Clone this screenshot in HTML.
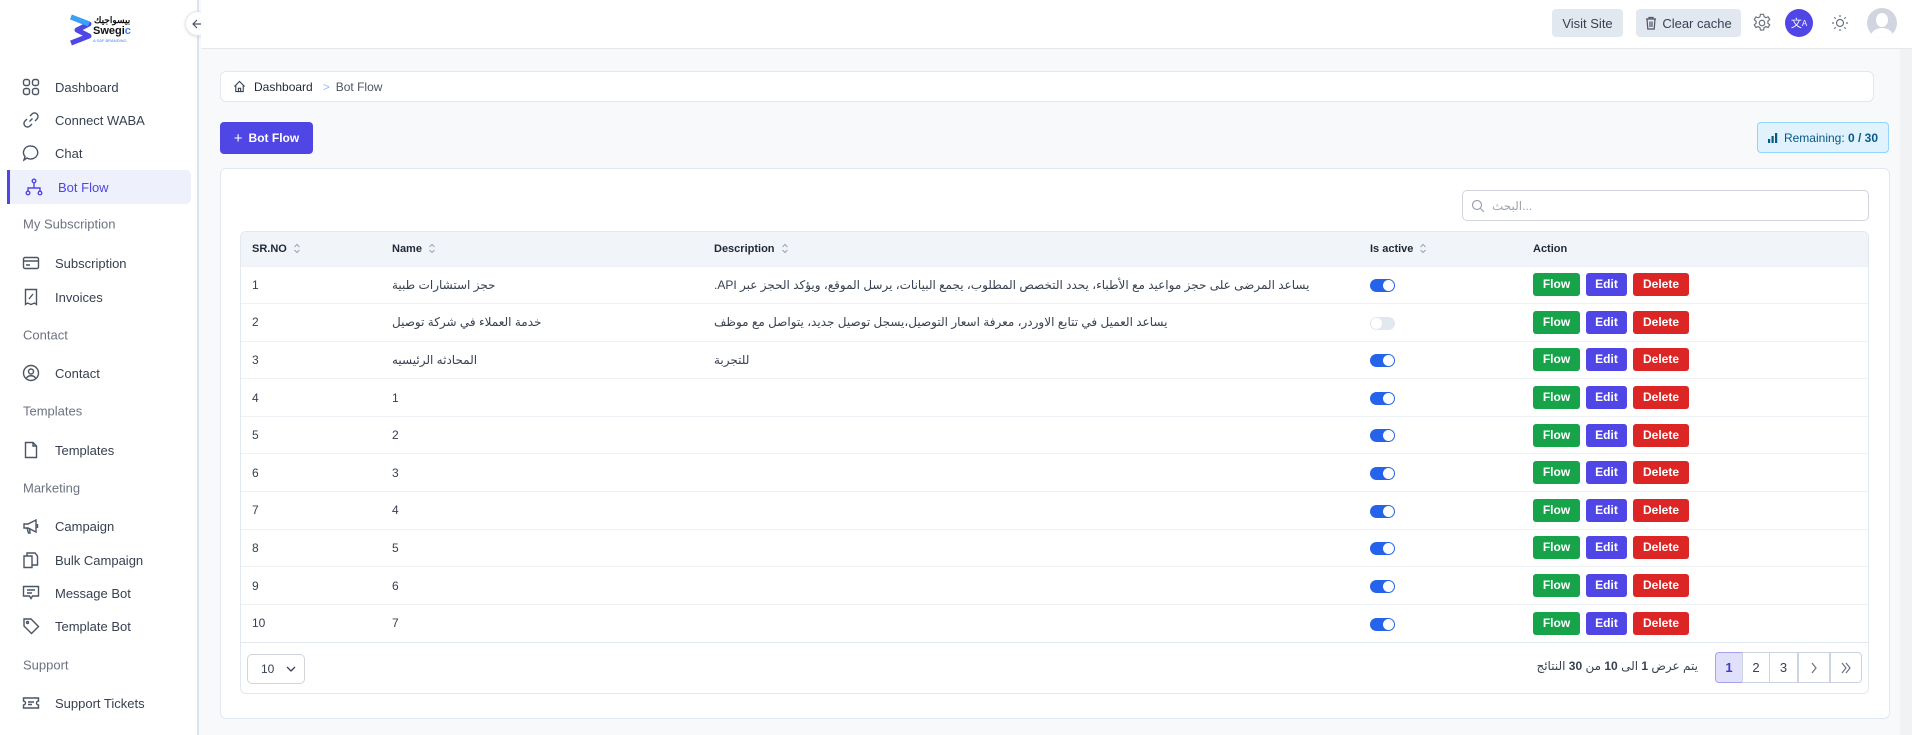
<!DOCTYPE html>
<html><head><meta charset="utf-8"><style>
*{box-sizing:border-box;margin:0;padding:0}
body{width:1912px;height:735px;overflow:hidden;background:#f8f9fb;font-family:"Liberation Sans","Noto Sans CJK SC",sans-serif;color:#374151;position:relative}
.abs{position:absolute}
#side{left:0;top:0;width:199px;height:735px;background:#fff;border-right:2px solid #dde3ec}
.mi{position:absolute;left:22px;font-size:13px;color:#374151;display:flex;align-items:center;height:20px;transform:translateY(-50%)}
.mi svg{width:18px;height:18px;margin-right:15px;stroke:#4b5563;fill:none;stroke-width:1.4}
.sh{position:absolute;left:23px;font-size:13px;color:#6b7280;transform:translateY(-50%)}
#hdr{left:201px;top:0;right:0;height:49px;background:#fff;border-bottom:1px solid #e5e7eb}
.btn{position:absolute;background:#e2e8f0;border-radius:4px;font-size:13px;color:#374151;display:flex;align-items:center;justify-content:center}
.card{position:absolute;background:#fff;border:1px solid #e2e8f0;border-radius:6px}
table{border-collapse:collapse;width:100%}
th{height:34px;background:#f1f4f8;font-size:11px;font-weight:bold;color:#1f2937;text-align:left;padding:0}
td{height:37.6px;font-size:12px;color:#374151;border-top:1px solid #eef1f5;padding:0}
.sort{display:inline-block;width:8px;height:11px;margin-left:6px;vertical-align:middle}
.tg{display:inline-block;width:25px;height:13px;border-radius:7px;background:#2563eb;position:relative;vertical-align:middle}
.tg:after{content:"";position:absolute;right:1px;top:1px;width:11px;height:11px;border-radius:50%;background:#fff}
.tg.off{background:#e2e8f0}.tg.off:after{left:1px;right:auto}
.b{display:inline-block;height:23px;line-height:23px;color:#fff;font-size:12px;font-weight:bold;border-radius:3px;text-align:center;margin-right:6px;vertical-align:middle}
.f{background:#16a34a;width:47px}.e{background:#4f46e5;width:41px}.d{background:#dc2626;width:56px}
.ar{font-family:"Liberation Sans","Noto Sans CJK SC","DejaVu Sans",sans-serif}
.pg{position:absolute;top:652px;height:31px;border:1px solid #cbd5e1;font-size:13px;display:flex;align-items:center;justify-content:center;color:#374151;background:#fff}
</style></head><body>
<svg width="0" height="0" style="position:absolute"><defs><symbol id="s" viewBox="0 0 8 11"><path d="M1.5 4 L4 1.5 L6.5 4 M1.5 7 L4 9.5 L6.5 7" fill="none" stroke="#9ca3af" stroke-width="1"/></symbol></defs></svg>
<div id="side" class="abs">
 <svg class="abs" style="left:67px;top:14px" width="28" height="32" viewBox="0 0 28 32"><path d="M4 3 L22 10 L10 16 L22 22 L4 29" stroke="#4f46e5" stroke-width="5" fill="none" stroke-linejoin="round"/><path d="M4 3 L22 10" stroke="#38a3f5" stroke-width="5"/></svg>
 <div class="abs" style="left:94px;top:15px;font-size:9px;font-weight:bold;color:#111">بيسواجيك</div>
 <div class="abs" style="left:93px;top:25px;font-size:11px;font-weight:bold;color:#111">Swegi<span style="color:#3b82f6">c</span></div>
 <div class="abs" style="left:93px;top:38px;font-size:4px;color:#3b82f6">A SAF BRANDING</div>
 <div class="mi" style="top:87px"><svg viewBox="0 0 18 18"><rect x="1.5" y="1.5" width="6" height="6" rx="2"/><rect x="10.5" y="1.5" width="6" height="6" rx="2"/><rect x="1.5" y="10.5" width="6" height="6" rx="2"/><rect x="10.5" y="10.5" width="6" height="6" rx="2"/></svg>Dashboard</div>
 <div class="mi" style="top:120px"><svg viewBox="0 0 18 18"><path d="M7.5 10.5 L10.5 7.5 M8 5 L10 3 a3 3 0 0 1 5 5 L13 10 M10 13 L8 15 a3 3 0 0 1 -5 -5 L5 8"/></svg>Connect WABA</div>
 <div class="mi" style="top:153px"><svg viewBox="0 0 18 18"><path d="M9 2 a7 6.5 0 1 1 -4 12 L2 16 L3 12.5 A7 6.5 0 0 1 9 2z"/></svg>Chat</div>
 <div class="abs" style="left:7px;top:170px;width:184px;height:34px;background:#eef0fb;border-left:3px solid #4f46e5;border-radius:0 5px 5px 0"></div>
 <div class="mi" style="top:187px;color:#4f46e5;left:25px"><svg viewBox="0 0 18 18" style="stroke:#4f46e5"><circle cx="9" cy="3" r="1.8"/><circle cx="3" cy="15" r="1.8"/><circle cx="15" cy="15" r="1.8"/><path d="M9 5 V10 M3 13 V10 H15 V13"/></svg>Bot Flow</div>
 <div class="sh" style="top:224px">My Subscription</div>
 <div class="mi" style="top:263px"><svg viewBox="0 0 18 18"><rect x="1.5" y="3.5" width="15" height="11" rx="1.5"/><path d="M1.5 7 H16.5 M4 11 H8"/></svg>Subscription</div>
 <div class="mi" style="top:297px"><svg viewBox="0 0 18 18"><path d="M3.5 1.5 H14.5 V16.5 L12.5 15 L9 16.5 L5.5 15 L3.5 16.5Z M7 11 L11 6"/></svg>Invoices</div>
 <div class="sh" style="top:335px">Contact</div>
 <div class="mi" style="top:373px"><svg viewBox="0 0 18 18"><circle cx="9" cy="9" r="7.5"/><circle cx="9" cy="7.5" r="2.5"/><path d="M4.5 14 a5 4 0 0 1 9 0"/></svg>Contact</div>
 <div class="sh" style="top:411px">Templates</div>
 <div class="mi" style="top:450px"><svg viewBox="0 0 18 18"><path d="M3.5 1.5 H11 L14.5 5 V16.5 H3.5Z M11 1.5 V5 H14.5"/></svg>Templates</div>
 <div class="sh" style="top:488px">Marketing</div>
 <div class="mi" style="top:526px"><svg viewBox="0 0 18 18"><path d="M2 7 H6 L14 3 V15 L6 11 H2Z M5 11 L6.5 16 H8 L7.5 11 M15.5 7 V11"/></svg>Campaign</div>
 <div class="mi" style="top:560px"><svg viewBox="0 0 18 18"><path d="M2 5 H10 V16.5 H2Z M5 5 V2 H13 L15.5 5 V14 H10"/></svg>Bulk Campaign</div>
 <div class="mi" style="top:593px"><svg viewBox="0 0 18 18"><path d="M1.5 2.5 H16.5 V12 H10.5 L9 14.5 L7.5 12 H1.5Z M5 6 H13 M5 9 H10"/></svg>Message Bot</div>
 <div class="mi" style="top:626px"><svg viewBox="0 0 18 18"><path d="M2 2 H9 L16.5 9.5 L9.5 16.5 L2 9Z"/><circle cx="5.5" cy="5.5" r="1"/></svg>Template Bot</div>
 <div class="sh" style="top:665px">Support</div>
 <div class="mi" style="top:703px"><svg viewBox="0 0 18 18"><path d="M1.5 4 H16.5 V7 a2 2 0 0 0 0 4 V14 H1.5 V11 a2 2 0 0 0 0 -4Z M6 8 H12 M6 10.5 H10"/></svg>Support Tickets</div>
</div>
<div class="abs" style="left:185px;top:11px;width:25px;height:25px;border-radius:50%;background:#fff;border:1px solid #e5e7eb;box-shadow:0 1px 3px rgba(0,0,0,.12);display:flex;align-items:center;justify-content:center"><svg width="12" height="12" viewBox="0 0 12 12" fill="none" stroke="#4b5563" stroke-width="1.2"><path d="M11 6 H1 M5 2 L1 6 L5 10"/></svg></div>
<div id="hdr" class="abs"></div>
<div class="btn" style="left:1552px;top:9px;width:71px;height:28px">Visit Site</div>
<div class="btn" style="left:1636px;top:9px;width:105px;height:28px"><svg width="12" height="14" viewBox="0 0 12 14" fill="none" stroke="#4b5563" stroke-width="1.2" style="margin-right:5px"><path d="M1 3 H11 M4 3 V1.5 H8 V3 M2 3 L2.8 13 H9.2 L10 3 M5 5.5 V11 M7 5.5 V11"/></svg>Clear cache</div>
<svg class="abs" style="left:1751px;top:12px" width="22" height="22" viewBox="0 0 24 24" fill="none" stroke="#6b7280" stroke-width="1.3"><circle cx="12" cy="12" r="3"/><path d="M10.3 2.5h3.4l.5 2.6 2 1.1 2.5-.9 1.7 2.9-2 1.8v2.2l2 1.8-1.7 2.9-2.5-.9-2 1.1-.5 2.6h-3.4l-.5-2.6-2-1.1-2.5.9-1.7-2.9 2-1.8V10.1l-2-1.8 1.7-2.9 2.5.9 2-1.1z"/></svg>
<div class="abs" style="left:1785px;top:9px;width:28px;height:28px;border-radius:50%;background:#4f46e5;color:#fff;font-size:11px;display:flex;align-items:center;justify-content:center">文<span style="font-size:8px">A</span></div>
<svg class="abs" style="left:1831px;top:14px" width="18" height="18" viewBox="0 0 18 18" fill="none" stroke="#6b7280" stroke-width="1.2"><circle cx="9" cy="9" r="3.5"/><path d="M9 1v2M9 15v2M1 9h2M15 9h2M3.3 3.3l1.4 1.4M13.3 13.3l1.4 1.4M3.3 14.7l1.4-1.4M13.3 4.7l1.4-1.4"/></svg>
<div class="abs" style="left:1867px;top:8px;width:30px;height:30px;border-radius:50%;background:#d1d5e0;overflow:hidden"><div class="abs" style="left:9px;top:5px;width:12px;height:14px;border-radius:50%;background:#fff"></div><div class="abs" style="left:4px;top:20px;width:22px;height:16px;border-radius:50%;background:#fff"></div></div>
<div class="abs" style="left:1900px;top:49px;width:12px;height:686px;background:#f1f2f4"></div>

<div class="card" style="left:220px;top:71px;width:1654px;height:31px;display:flex;align-items:center;padding-left:12px;font-size:12px;color:#1f2937"><svg width="13" height="13" viewBox="0 0 14 14" fill="none" stroke="#374151" stroke-width="1.2" style="margin-right:8px"><path d="M1.5 7 L7 1.5 L12.5 7 M3 5.5 V12.5 H11 V5.5 M5.8 12.5 V9 H8.2 V12.5"/></svg>Dashboard<span style="color:#a5b4fc;margin:0 6px 0 10px">&gt;</span><span style="color:#4b5563">Bot Flow</span></div>
<div class="abs" style="left:220px;top:122px;width:93px;height:32px;background:#4f46e5;border-radius:4px;color:#fff;font-size:12px;font-weight:bold;display:flex;align-items:center;justify-content:center"><span style="font-size:15px;font-weight:normal;margin-right:6px">+</span>Bot Flow</div>
<div class="abs" style="left:1757px;top:122px;width:132px;height:31px;background:#e0f2fe;border:1px solid #93d5f8;border-radius:4px;color:#075985;font-size:12px;display:flex;align-items:center;justify-content:center"><svg width="10" height="10" viewBox="0 0 10 10" style="margin-right:6px" fill="#075985"><rect x="0" y="6" width="2.2" height="4"/><rect x="3.5" y="3" width="2.2" height="7"/><rect x="7" y="0" width="2.2" height="10"/></svg>Remaining:&nbsp;<b>0 / 30</b></div>

<div class="card" style="left:220px;top:168px;width:1670px;height:551px"></div>
<div class="abs" style="left:1462px;top:190px;width:407px;height:31px;border:1px solid #d1d5db;border-radius:5px;background:#fff;display:flex;align-items:center;padding-left:8px;font-size:12px;color:#9ca3af"><svg width="14" height="14" viewBox="0 0 14 14" fill="none" stroke="#9ca3af" stroke-width="1.2" style="margin-right:7px"><circle cx="6" cy="6" r="4.5"/><path d="M9.5 9.5 L13 13"/></svg><span class="ar">البحث...</span></div>
<div class="abs" style="left:240px;top:231px;width:1629px;height:463px;border:1px solid #e2e8f0;border-radius:6px;overflow:hidden;background:#fff">
<table>
<colgroup><col style="width:151px"><col style="width:322px"><col style="width:656px"><col style="width:163px"><col></colgroup>
<tr><th style="padding-left:11px">SR.NO<svg class="sort"><use href="#s"/></svg></th><th>Name<svg class="sort"><use href="#s"/></svg></th><th>Description<svg class="sort"><use href="#s"/></svg></th><th>Is active<svg class="sort"><use href="#s"/></svg></th><th>Action</th></tr>
<tr><td style="padding-left:11px">1</td><td class="ar">حجز استشارات طبية</td><td class="ar">.API يساعد المرضى على حجز مواعيد مع الأطباء، يحدد التخصص المطلوب، يجمع البيانات، يرسل الموقع، ويؤكد الحجز عبر</td><td><span class="tg"></span></td><td><span class="b f">Flow</span><span class="b e">Edit</span><span class="b d">Delete</span></td></tr>
<tr><td style="padding-left:11px">2</td><td class="ar">خدمة العملاء في شركة توصيل</td><td class="ar">يساعد العميل في تتابع الاوردر، معرفة اسعار التوصيل،يسجل توصيل جديد، يتواصل مع موظف</td><td><span class="tg off"></span></td><td><span class="b f">Flow</span><span class="b e">Edit</span><span class="b d">Delete</span></td></tr>
<tr><td style="padding-left:11px">3</td><td class="ar">المحادثه الرئيسيه</td><td class="ar">للتجربة</td><td><span class="tg"></span></td><td><span class="b f">Flow</span><span class="b e">Edit</span><span class="b d">Delete</span></td></tr>
<tr><td style="padding-left:11px">4</td><td>1</td><td></td><td><span class="tg"></span></td><td><span class="b f">Flow</span><span class="b e">Edit</span><span class="b d">Delete</span></td></tr>
<tr><td style="padding-left:11px">5</td><td>2</td><td></td><td><span class="tg"></span></td><td><span class="b f">Flow</span><span class="b e">Edit</span><span class="b d">Delete</span></td></tr>
<tr><td style="padding-left:11px">6</td><td>3</td><td></td><td><span class="tg"></span></td><td><span class="b f">Flow</span><span class="b e">Edit</span><span class="b d">Delete</span></td></tr>
<tr><td style="padding-left:11px">7</td><td>4</td><td></td><td><span class="tg"></span></td><td><span class="b f">Flow</span><span class="b e">Edit</span><span class="b d">Delete</span></td></tr>
<tr><td style="padding-left:11px">8</td><td>5</td><td></td><td><span class="tg"></span></td><td><span class="b f">Flow</span><span class="b e">Edit</span><span class="b d">Delete</span></td></tr>
<tr><td style="padding-left:11px">9</td><td>6</td><td></td><td><span class="tg"></span></td><td><span class="b f">Flow</span><span class="b e">Edit</span><span class="b d">Delete</span></td></tr>
<tr><td style="padding-left:11px">10</td><td>7</td><td></td><td><span class="tg"></span></td><td><span class="b f">Flow</span><span class="b e">Edit</span><span class="b d">Delete</span></td></tr>
</table>
<div style="border-top:1px solid #e2e8f0"></div>
</div>
<div class="abs" style="left:247px;top:654px;width:58px;height:30px;border:1px solid #d1d5db;border-radius:5px;background:#fff;font-size:12px;display:flex;align-items:center;padding-left:13px">10<svg width="10" height="6" viewBox="0 0 10 6" fill="none" stroke="#374151" stroke-width="1.3" style="margin-left:12px"><path d="M1 1 L5 5 L9 1"/></svg></div>
<div class="abs ar" style="left:1490px;top:659px;width:208px;text-align:right;font-size:12px;color:#374151" dir="rtl">يتم عرض <b>1</b> الى <b>10</b> من <b>30</b> النتائج</div>
<div class="pg" style="left:1715px;width:28px;background:#e0e0fb;border-color:#a5a0f0;color:#4338ca;font-weight:bold;border-radius:4px 0 0 4px">1</div>
<div class="pg" style="left:1742px;width:28px">2</div>
<div class="pg" style="left:1769px;width:29px">3</div>
<div class="pg" style="left:1798px;width:32px"><svg width="8" height="12" viewBox="0 0 8 12" fill="none" stroke="#6b7280" stroke-width="1.2"><path d="M2 1 L6 6 L2 11"/></svg></div>
<div class="pg" style="left:1830px;width:32px;border-radius:0 4px 4px 0"><svg width="12" height="12" viewBox="0 0 12 12" fill="none" stroke="#6b7280" stroke-width="1.2"><path d="M2 1 L6 6 L2 11 M6 1 L10 6 L6 11"/></svg></div>
</body></html>
